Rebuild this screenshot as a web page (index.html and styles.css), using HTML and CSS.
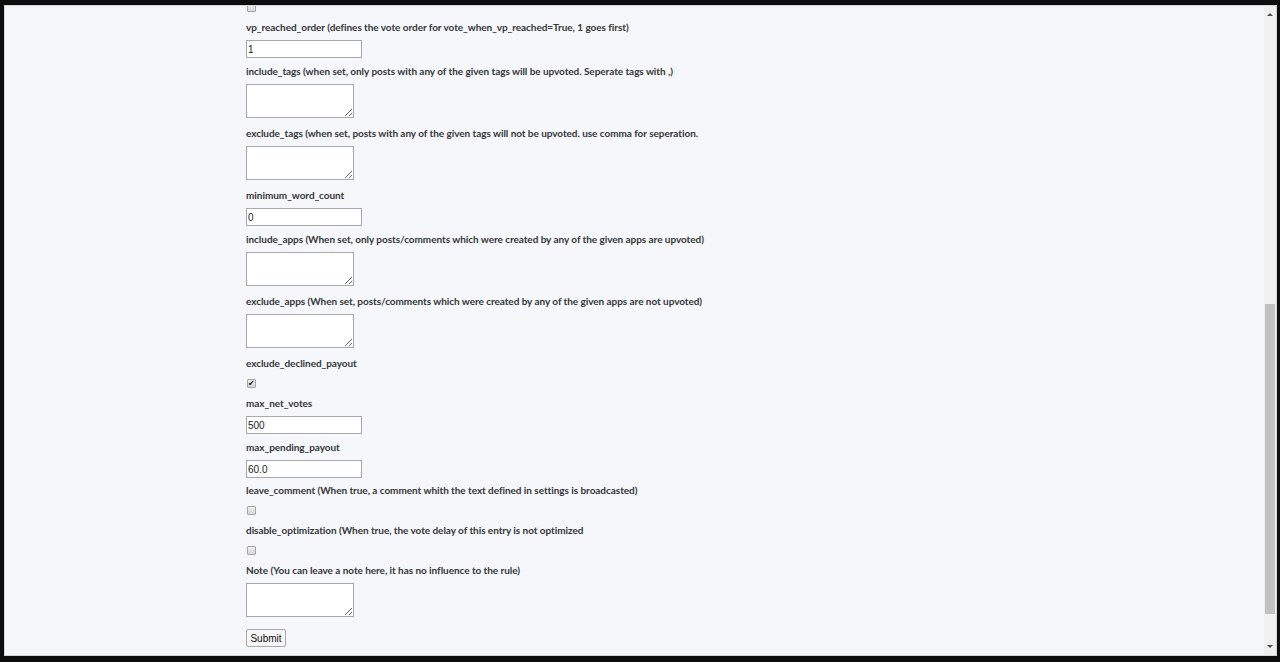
FILE: index.html
```html
<!DOCTYPE html>
<html>
<head>
<meta charset="UTF-8">
<title>Edit rule</title>
<link rel="stylesheet" href="styles.css">
</head>
<body>

<div class="window">
	<div class="viewport">
		<form class="rule_form" onsubmit="return false;">
			<input type="checkbox" class="check first" />

			<label>vp_reached_order (defines the vote order for vote_when_vp_reached=True, 1 goes first)</label>
			<input type="text" class="text" value="1" />

			<label>include_tags (when set, only posts with any of the given tags will be upvoted. Seperate tags with ,)</label>
			<textarea></textarea>

			<label>exclude_tags (when set, posts with any of the given tags will not be upvoted. use comma for seperation.</label>
			<textarea></textarea>

			<label>minimum_word_count</label>
			<input type="text" class="text" value="0" />

			<label>include_apps (When set, only posts/comments which were created by any of the given apps are upvoted)</label>
			<textarea></textarea>

			<label>exclude_apps (When set, posts/comments which were created by any of the given apps are not upvoted)</label>
			<textarea></textarea>

			<label class="for_check">exclude_declined_payout</label>
			<input type="checkbox" class="check" checked />

			<label>max_net_votes</label>
			<input type="text" class="text" value="500" />

			<label>max_pending_payout</label>
			<input type="text" class="text" value="60.0" />

			<label class="for_check">leave_comment (When true, a comment whith the text defined in settings is broadcasted)</label>
			<input type="checkbox" class="check" />

			<label class="for_check">disable_optimization (When true, the vote delay of this entry is not optimized</label>
			<input type="checkbox" class="check" />

			<label>Note (You can leave a note here, it has no influence to the rule)</label>
			<textarea></textarea>

			<button type="submit" class="submit">Submit</button>
		</form>
	</div>
	<div class="scrollbar">
		<div class="arrow up"></div>
		<div class="track"><div class="thumb"></div></div>
		<div class="arrow down"></div>
	</div>
</div>

</body>
</html>
```

FILE: styles.css
```css
html, body {
	margin: 0;
	height: 100%;
}
body {
	background-color: #0e0e0e;
	padding: 5px 3px 6px 4px;
	box-sizing: border-box;
	overflow: hidden;
}
.window {
	height: 100%;
	display: flex;
	border: 1px solid #d4d6d9;
	background-color: #f5f7fa;
	box-sizing: border-box;
}
.viewport {
	flex: 1;
	overflow: hidden;
	padding-left: 241px;
}
.rule_form {
	display: flex;
	flex-direction: column;
	align-items: flex-start;
	font-family: Lato, "Liberation Sans", sans-serif;
}
.rule_form label {
	display: block;
	font-size: 10px;
	font-weight: bold;
	line-height: 16px;
	letter-spacing: -0.05px;
	color: #34363a;
	margin: 0 0 5px 0;
	white-space: nowrap;
}
.rule_form label.for_check {
	margin-bottom: 8px;
}
input.text + label.for_check {
	margin-top: -1px;
}
input.text {
	display: block;
	width: 116px;
	height: 18px;
	margin: 0 0 5px 0;
	padding: 0 1px;
	box-sizing: border-box;
	border: 1px solid #a8a9ab;
	background-color: #ffffff;
	font-family: "Liberation Sans", sans-serif;
	font-size: 10px;
	color: #222222;
	outline: none;
}
textarea {
	display: block;
	width: 108px;
	height: 34px;
	margin: 0 0 7px 0;
	padding: 1px;
	box-sizing: border-box;
	border: 1px solid #a8a9ab;
	background-color: #ffffff;
	font-family: "Liberation Sans", sans-serif;
	font-size: 10px;
}
input.check {
	appearance: none;
	-webkit-appearance: none;
	display: block;
	position: relative;
	width: 9px;
	height: 9px;
	margin: 0 0 7px 1px;
	border: 1px solid #a5a5a5;
	border-radius: 1px;
	background: linear-gradient(#eeeeee, #d8d8d8);
	box-sizing: border-box;
}
input.check.first {
	margin-top: -3px;
}
input.check:checked::after {
	content: "\2714";
	position: absolute;
	left: 0;
	top: -1px;
	font-family: "DejaVu Sans", sans-serif;
	font-size: 8px;
	line-height: 9px;
	color: #111111;
}
button.submit {
	display: block;
	width: 40px;
	height: 18px;
	margin: 5px 0 0 0;
	padding: 0;
	border: 1px solid #a8a9ab;
	border-radius: 2px;
	background-color: #f7f7f7;
	font-family: "Liberation Sans", sans-serif;
	font-size: 10px;
	color: #111111;
}
.scrollbar {
	width: 12px;
	display: flex;
	flex-direction: column;
	background-color: #f0f0f0;
}
.arrow {
	height: 17px;
	display: flex;
	align-items: center;
	justify-content: center;
}
.arrow.up::before {
	content: "";
	border-left: 3px solid transparent;
	border-right: 3px solid transparent;
	border-bottom: 3px solid #505050;
}
.arrow.down::before {
	content: "";
	border-left: 3px solid transparent;
	border-right: 3px solid transparent;
	border-top: 3px solid #505050;
}
.track {
	flex: 1;
	padding: 281px 1px 0 1px;
}
.thumb {
	height: 310px;
	background-color: #c1c1c1;
}
```
